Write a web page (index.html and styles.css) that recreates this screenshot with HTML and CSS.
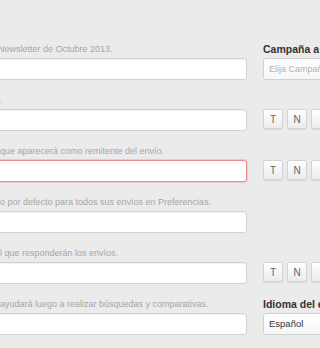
FILE: index.html
```html
<!DOCTYPE html>
<html lang="es">
<head>
<meta charset="utf-8">
<title>Envío</title>
<link rel="stylesheet" href="styles.css">
</head>
<body>
<div class="form">
  <div class="row">
    <div class="main">
      <p class="help help-cut">Newsletter de Octubre 2013.</p>
      <input class="field" type="text">
    </div>
    <div class="side">
      <p class="side-label">Campaña a asociar</p>
      <div class="select select-empty">Elija Campaña</div>
    </div>
  </div>
  <div class="row">
    <div class="main">
      <p class="help">.</p>
      <input class="field" type="text">
    </div>
    <div class="side">
      <p class="side-label"></p>
      <div class="tags"><button class="tag">T</button><button class="tag">N</button><button class="tag">I</button></div>
    </div>
  </div>
  <div class="row">
    <div class="main">
      <p class="help">que aparecerá como remitente del envío.</p>
      <input class="field field-error" type="text">
    </div>
    <div class="side">
      <p class="side-label"></p>
      <div class="tags"><button class="tag">T</button><button class="tag">N</button><button class="tag">I</button></div>
    </div>
  </div>
  <div class="row">
    <div class="main">
      <p class="help">o por defecto para todos sus envíos en Preferencias.</p>
      <input class="field" type="text">
    </div>
    <div class="side"></div>
  </div>
  <div class="row">
    <div class="main">
      <p class="help">l que responderán los envíos.</p>
      <input class="field" type="text">
    </div>
    <div class="side">
      <p class="side-label"></p>
      <div class="tags"><button class="tag">T</button><button class="tag">N</button><button class="tag">I</button></div>
    </div>
  </div>
  <div class="row">
    <div class="main">
      <p class="help">ayudará luego a realizar búsquedas y comparativas.</p>
      <input class="field" type="text">
    </div>
    <div class="side">
      <p class="side-label">Idioma del envío</p>
      <div class="select">Español</div>
    </div>
  </div>
</div>
</body>
</html>
```

FILE: styles.css
```css
html, body {
  margin: 0;
  padding: 0;
  background: #ebebeb;
  overflow: hidden;
  font-family: "Liberation Sans", Arial, sans-serif;
}

.form {
  padding-top: 43px;
  margin-left: -20px;
}

.row {
  display: grid;
  grid-template-columns: 267px 150px;
  column-gap: 16px;
  margin-bottom: 14px;
}

.main, .side {
  display: flex;
  flex-direction: column;
}

.help {
  margin: 0 0 3px 0;
  height: 12px;
  line-height: 12px;
  font-size: 9px;
  color: #a6a6a6;
  padding-left: 20px;
  white-space: nowrap;
}

.help-cut {
  padding-left: 18px;
}

.field {
  box-sizing: border-box;
  height: 22px;
  width: 100%;
  margin: 0;
  padding: 0 5px;
  background: #fff;
  border: 1px solid #d2d2d2;
  border-radius: 3px;
  box-shadow: inset 0 1px 1px rgba(0, 0, 0, 0.06);
  outline: none;
}

.field-error {
  border-color: #ec8c8e;
  box-shadow: 0 0 0 1px rgba(236, 140, 142, 0.35);
}

.side-label {
  margin: 0 0 3px 0;
  height: 12px;
  line-height: 12px;
  font-size: 10.5px;
  font-weight: bold;
  color: #333;
  white-space: nowrap;
}

.select {
  box-sizing: border-box;
  height: 22px;
  width: 140px;
  padding: 0 5px;
  line-height: 20px;
  font-size: 9.5px;
  color: #333;
  background: linear-gradient(#ffffff, #f7f7f7);
  border: 1px solid #d0d0d0;
  border-radius: 3px;
  white-space: nowrap;
}

.select-empty {
  color: #b0b0b0;
  font-size: 9px;
}

.tags {
  display: flex;
  gap: 4px;
}

.tag {
  box-sizing: border-box;
  width: 20px;
  height: 20px;
  margin: 0;
  padding: 0;
  font-family: "Liberation Sans", Arial, sans-serif;
  font-size: 10px;
  color: #666;
  background: linear-gradient(#ffffff, #ececec);
  border: 1px solid #d4d4d4;
  border-radius: 2px;
  box-shadow: 0 1px 1px rgba(0, 0, 0, 0.08);
}
```
